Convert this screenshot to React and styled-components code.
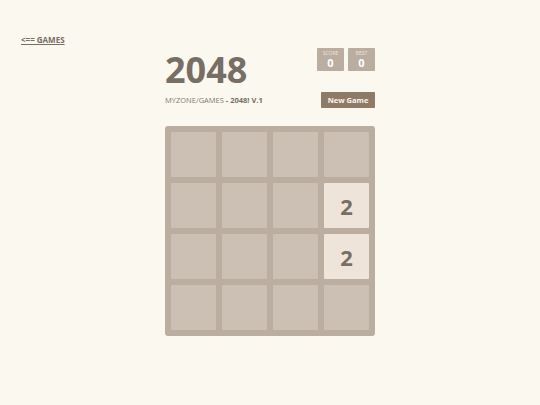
import React from 'react';
import styled, { createGlobalStyle } from 'styled-components';

const GlobalStyle = createGlobalStyle`
  html, body {
    margin: 0;
    padding: 0;
    background: #faf8ef;
    font-family: "Open Sans", "DejaVu Sans", sans-serif;
    color: #776e65;
  }
`;

const Page = styled.div`
  width: 540px;
  height: 405px;
  box-sizing: border-box;
  padding: 35px 21px 0;
`;

const BackLink = styled.a`
  display: block;
  width: max-content;
  font-size: 8px;
  font-weight: 700;
  color: #776e65;
  text-decoration: underline;
  line-height: 9px;
`;

const Container = styled.div`
  width: 210px;
  margin: 0 auto;
  padding-top: 4px;
`;

const Heading = styled.div`
  display: flex;
  justify-content: space-between;
  align-items: flex-start;
`;

const Title = styled.h1`
  margin: 0;
  font-size: 36px;
  font-weight: 700;
  line-height: 44px;
  color: #776e65;
`;

const Scores = styled.div`
  display: flex;
  gap: 4px;
`;

const ScoreBox = styled.div`
  width: 27px;
  height: 23px;
  background: #bbada0;
  border-radius: 1px;
  display: flex;
  flex-direction: column;
  align-items: center;
  color: #fff;
  box-sizing: border-box;
  padding-top: 2px;
`;

const ScoreLabel = styled.span`
  font-size: 5px;
  line-height: 7px;
  color: #eee4da;
  text-transform: uppercase;
`;

const ScoreValue = styled.span`
  font-size: 11px;
  font-weight: 700;
  line-height: 12px;
`;

const Above = styled.div`
  display: flex;
  justify-content: space-between;
  align-items: center;
`;

const Intro = styled.p`
  margin: 0;
  font-size: 7.5px;
  color: #857b72;
  strong {
    font-weight: 700;
    color: #776e65;
  }
`;

const NewGame = styled.button`
  width: 54px;
  height: 16px;
  border: none;
  border-radius: 1px;
  background: #8f7a66;
  color: #f9f6f2;
  font-family: inherit;
  font-size: 7.5px;
  font-weight: 700;
  padding: 0;
`;

const Board = styled.div`
  margin-top: 18px;
  width: 210px;
  height: 210px;
  box-sizing: border-box;
  padding: 6px;
  background: #bbada0;
  border-radius: 3px;
  display: grid;
  grid-template-columns: repeat(4, 45px);
  grid-template-rows: repeat(4, 45px);
  gap: 6px;
`;

const Cell = styled.div`
  border-radius: 1px;
  background: ${p => (p.value ? '#eee4da' : 'rgba(238, 228, 218, 0.35)')};
  display: flex;
  align-items: center;
  justify-content: center;
  font-size: 22px;
  font-weight: 700;
  color: #776e65;
`;

const grid = [
  [0, 0, 0, 0],
  [0, 0, 0, 2],
  [0, 0, 0, 2],
  [0, 0, 0, 0],
];

export default function App() {
  return (
    <>
      <GlobalStyle />
      <Page>
        <BackLink href="#">&lt;== GAMES</BackLink>
        <Container>
          <Heading>
            <Title>2048</Title>
            <Scores>
              <ScoreBox>
                <ScoreLabel>Score</ScoreLabel>
                <ScoreValue>0</ScoreValue>
              </ScoreBox>
              <ScoreBox>
                <ScoreLabel>Best</ScoreLabel>
                <ScoreValue>0</ScoreValue>
              </ScoreBox>
            </Scores>
          </Heading>
          <Above>
            <Intro>
              MYZONE/GAMES <strong>- 2048! V.1</strong>
            </Intro>
            <NewGame>New Game</NewGame>
          </Above>
          <Board>
            {grid.flat().map((v, i) => (
              <Cell key={i} value={v}>
                {v ? v : null}
              </Cell>
            ))}
          </Board>
        </Container>
      </Page>
    </>
  );
}
